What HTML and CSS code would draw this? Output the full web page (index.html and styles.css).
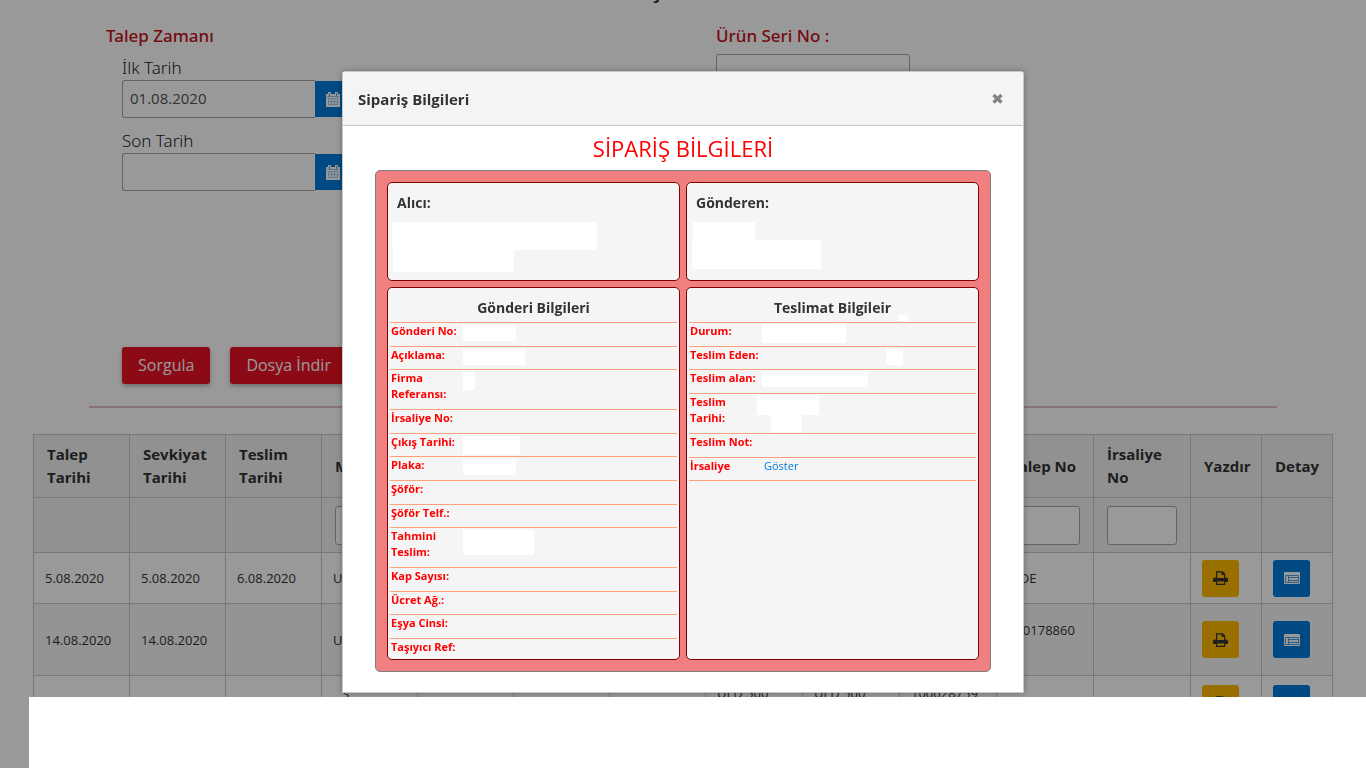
FILE: index.html
```html
<!DOCTYPE html>
<html lang="tr">
<head>
<meta charset="utf-8">
<title>Sipariş Bilgileri</title>
<link rel="stylesheet" href="styles.css">
</head>
<body>
<svg class="sprite" aria-hidden="true">
  <symbol id="calendar" viewBox="0 0 14 15">
    <path fill="#fff" d="M0 2h14v13H0z"/>
    <path fill="#fff" d="M2 0h3v4H2zM9 0h3v4H9z"/>
    <path fill="#8fc1ec" d="M1 4h12v1H1z"/>
    <path fill="#4d9fdf" d="M3 1h1v3H3zM10 1h1v3h-1z"/>
    <path stroke="#a5cdef" fill="none" d="M2 6.500h10M2 9.500h10M2 12.500h10M2.500 6v7M5.500 6v7M8.500 6v7M11.500 6v7"/>
  </symbol>
  <symbol id="printer" viewBox="0 0 15 14">
    <path fill="none" stroke="#333" stroke-width="1.200" d="M3.600 7V.8h6l2 2V7"/>
    <path fill="#333" d="M8.500 1v3H12V3zM1.500 6.500H3V7h9v-.5h1.500Q15 7 15 8.500V11H0V8.500Q0 7 1.500 6.500z"/>
    <path fill="#ffba01" stroke="#333" stroke-width="1.200" d="M3.600 9.800h8v3.500h-8z"/>
  </symbol>
  <symbol id="list" viewBox="0 0 16 12">
    <rect width="16" height="12" rx="1" fill="#fff"/>
    <path fill="none" stroke="#4d9fdf" d="M1.500 3.500h13v7h-13z"/>
    <path fill="none" stroke="#4d9fdf" d="M4.500 4v7M5 5.500h9M5 8.500h9"/>
  </symbol>
</svg>

<main class="page">
  <h1 class="page-title">ş</h1>
  <form class="filters">
    <section class="filter-group">
      <h2 class="group-title">Talep Zamanı</h2>
      <div class="group-body">
        <label for="first-date">İlk Tarih</label>
        <div class="date-field">
          <input id="first-date" type="text" value="01.08.2020">
          <button type="button" aria-label="Takvim"><svg width="14" height="15"><use href="#calendar"/></svg></button>
        </div>
        <label for="last-date">Son Tarih</label>
        <div class="date-field">
          <input id="last-date" type="text">
          <button type="button" aria-label="Takvim"><svg width="14" height="15"><use href="#calendar"/></svg></button>
        </div>
      </div>
    </section>
    <section class="filter-group">
      <label class="group-title" for="serial">Ürün Seri No :</label>
      <input id="serial" class="serial" type="text">
    </section>
  </form>
  <div class="actions">
    <button type="button">Sorgula</button>
    <button type="button">Dosya İndir</button>
  </div>
  <hr class="divider">

  <table class="orders">
    <colgroup><col span="7" class="col-a"><col span="5" class="col-b"><col span="2" class="col-c"></colgroup>
    <thead>
      <tr><th>Talep Tarihi</th><th>Sevkiyat Tarihi</th><th>Teslim Tarihi</th><th>M</th><th></th><th></th><th></th><th></th><th></th><th></th><th>Talep No</th><th>İrsaliye No</th><th>Yazdır</th><th>Detay</th></tr>
      <tr class="search-row"><td></td><td></td><td></td><td><input type="text" aria-label="M"></td><td></td><td></td><td></td><td></td><td></td><td></td><td><input type="text" aria-label="Talep No"></td><td><input type="text" aria-label="İrsaliye No"></td><td></td><td></td></tr>
    </thead>
    <tbody>
      <tr><td>5.08.2020</td><td>5.08.2020</td><td>6.08.2020</td><td>U</td><td></td><td></td><td></td><td></td><td></td><td></td><td>İADE</td><td></td>
        <td><button class="icon-button print" type="button" aria-label="Yazdır"><svg width="15" height="14"><use href="#printer"/></svg></button></td>
        <td><button class="icon-button detail" type="button" aria-label="Detay"><svg width="16" height="12"><use href="#list"/></svg></button></td></tr>
      <tr class="tall"><td>14.08.2020</td><td>14.08.2020</td><td></td><td>U</td><td></td><td></td><td></td><td></td><td></td><td></td><td>100178860<br>&nbsp;</td><td></td>
        <td><button class="icon-button print" type="button" aria-label="Yazdır"><svg width="15" height="14"><use href="#printer"/></svg></button></td>
        <td><button class="icon-button detail" type="button" aria-label="Detay"><svg width="16" height="12"><use href="#list"/></svg></button></td></tr>
      <tr><td></td><td></td><td></td><td>&nbsp; &nbsp;ş<br>&nbsp;</td><td></td><td></td><td></td><td>ULD 500<br>&nbsp;</td><td>ULD 500<br>&nbsp;</td><td>100028759<br>&nbsp;</td><td></td><td></td>
        <td><button class="icon-button print" type="button" aria-label="Yazdır"><svg width="15" height="14"><use href="#printer"/></svg></button></td>
        <td><button class="icon-button detail" type="button" aria-label="Detay"><svg width="16" height="12"><use href="#list"/></svg></button></td></tr>
    </tbody>
  </table>
</main>

<div class="overlay">
  <div class="dialog" role="dialog" aria-labelledby="dialog-title">
    <header class="dialog-header">
      <h2 id="dialog-title">Sipariş Bilgileri</h2>
      <button class="close" type="button" aria-label="Kapat"><svg width="11" height="11" viewBox="0 0 11 11"><path d="M1.500 2l8 7.500M9.500 2l-8 7.500" stroke="#848484" stroke-width="3.400"/></svg></button>
    </header>
    <div class="dialog-body">
      <h3 class="order-title">SİPARİŞ BİLGİLERİ</h3>
      <div class="order">
        <section class="panel party">
          <h4>Alıcı:</h4>
          <span class="mask m-recipient-1"></span>
          <span class="mask m-recipient-2"></span>
        </section>
        <section class="panel party">
          <h4>Gönderen:</h4>
          <span class="mask m-sender-1"></span>
          <span class="mask m-sender-2"></span>
        </section>
        <section class="panel">
          <h4 class="centered">Gönderi Bilgileri</h4>
          <dl class="details shipment">
            <div><dt>Gönderi No:</dt><dd><span class="mask m-53"></span></dd></div>
            <div><dt>Açıklama:</dt><dd><span class="mask m-62"></span></dd></div>
            <div><dt>Firma Referansı:</dt><dd><span class="mask m-12"></span></dd></div>
            <div><dt>İrsaliye No:</dt><dd></dd></div>
            <div><dt>Çıkış Tarihi:</dt><dd><span class="mask m-57"></span></dd></div>
            <div><dt>Plaka:</dt><dd><span class="mask m-53"></span></dd></div>
            <div><dt>Şöför:</dt><dd></dd></div>
            <div><dt>Şöför Telf.:</dt><dd></dd></div>
            <div><dt>Tahmini Teslim:</dt><dd><span class="mask m-71"></span></dd></div>
            <div><dt>Kap Sayısı:</dt><dd></dd></div>
            <div><dt>Ücret Ağ.:</dt><dd></dd></div>
            <div><dt>Eşya Cinsi:</dt><dd></dd></div>
            <div class="last"><dt>Taşıyıcı Ref:</dt><dd></dd></div>
          </dl>
        </section>
        <section class="panel">
          <h4 class="centered">Teslimat Bilgileir<span class="mask m-dot"></span></h4>
          <dl class="details delivery">
            <div><dt>Durum:</dt><dd><span class="mask m-84"></span></dd></div>
            <div><dt>Teslim Eden:</dt><dd><span class="mask m-17"></span></dd></div>
            <div><dt>Teslim alan:</dt><dd><span class="mask m-106"></span></dd></div>
            <div><dt>Teslim Tarihi:</dt><dd><span class="mask m-date"></span><span class="mask m-time"></span></dd></div>
            <div><dt>Teslim Not:</dt><dd></dd></div>
            <div><dt>İrsaliye</dt><dd><a href="#">Göster</a></dd></div>
          </dl>
        </section>
      </div>
    </div>
  </div>
</div>
<div class="bottom-cover"></div>
</body>
</html>
```
FILE: styles.css
```css
* { box-sizing: border-box; }
body {
  margin: 0;
  height: 100vh;
  overflow: hidden;
  background: #fff;
  color: #333;
  font: 14px/20px "Open Sans", "Noto Sans", sans-serif;
}
h1, h2, h3, h4, dl, dd { margin: 0; }
button, input { font: inherit; }
svg { display: block; }
.sprite { position: absolute; width: 0; height: 0; }

.page { height: 100vh; overflow: hidden; }
.page-title {
  margin: -28px 54px 0 0;
  height: 52px;
  font: 600 24px/32px "Open Sans", sans-serif;
  text-align: center;
  color: #222;
}
.filters {
  display: grid;
  grid-template-columns: 610px 1fr;
  height: 323px;
  padding-left: 106px;
}
.group-title {
  display: block;
  font: 500 17px/24px "Noto Sans", sans-serif;
  color: #c4121c;
}
.group-body { padding: 8px 0 0 16px; }
.group-body label {
  display: block;
  font: 300 17px/24px "Noto Sans", sans-serif;
  color: #212529;
}
.date-field { display: flex; align-items: center; margin-bottom: 11px; }
.date-field input, .serial {
  width: 194px;
  height: 38px;
  padding: 0 7px 2px;
  border: 1px solid #a6a6a6;
  border-radius: 3px;
  background: #fff;
  color: #555;
  font-size: 15px;
}
.date-field input { border-right: 0; border-radius: 3px 0 0 3px; width: 193px; }
.date-field button {
  display: grid;
  place-items: center;
  width: 36px;
  height: 36px;
  padding: 0;
  border: 0;
  background: #007ad9;
}
.serial { display: block; margin-top: 6px; }
.actions { display: flex; gap: 20px; padding-left: 122px; }
.actions button {
  height: 37px;
  padding: 0 16px 2px;
  border: 0;
  border-radius: 3px;
  background: #e91224;
  box-shadow: 0 2px 4px rgba(0, 0, 0, .3);
  color: #fff;
  font-size: 16px;
}
.divider { width: 87%; height: 2px; margin: 22px auto 26px; border: 0; background: #e5bfc2; }

.orders { width: 1300px; margin-left: 33px; border-collapse: collapse; table-layout: fixed; font-size: 13px; }
.col-a { width: 96px; }
.col-b { width: 97px; }
.col-c { width: 71px; }
.orders th, .orders td { border: 1px solid #c8c8c8; }
.orders th {
  height: 63px;
  padding: 8px 13px;
  background: #f2f2f2;
  font: 700 15px/23px "Open Sans", sans-serif;
  text-align: left;
}
.orders td { height: 51px; padding: 0 11px; }
.orders .search-row td { height: 55px; padding: 0 13px; background: #f2f2f2; }
.orders .tall td { height: 72px; background: #f7f7f7; }
.orders tbody tr:last-child td { height: 55px; }
.orders input {
  display: block;
  width: 100%;
  height: 39px;
  border: 1px solid #a6a6a6;
  border-radius: 3px;
  background: #fff;
}
.icon-button {
  display: grid;
  place-items: center;
  width: 37px;
  height: 37px;
  padding: 0;
  border: 0;
  border-radius: 3px;
}
.print { background: #ffba01; }
.detail { background: #007ad9; }

.overlay {
  position: fixed;
  inset: 0;
  display: flex;
  justify-content: center;
  align-items: flex-start;
  padding-top: 71px;
  background: rgba(0, 0, 0, .4);
}
.dialog {
  width: 682px;
  border: 1px solid #c8c8c8;
  border-radius: 3px 3px 0 0;
  background: #fff;
  box-shadow: 0 0 6px rgba(0, 0, 0, .3);
}
.dialog-header {
  display: flex;
  justify-content: space-between;
  align-items: center;
  height: 54px;
  padding: 0 20px 0 15px;
  border-bottom: 1px solid #c8c8c8;
  background: #f4f4f4;
}
.dialog-header h2 { font-size: 15px; font-weight: 700; }
.close { padding: 0; border: 0; background: none; }
.dialog-body { padding: 7px 32px 20px; }
.order-title { font-size: 22px; line-height: 30px; font-weight: 400; color: #f00; text-align: center; }
.order {
  display: grid;
  grid-template-columns: 1fr 1fr;
  gap: 6px;
  margin-top: 7px;
  padding: 11px;
  border: 1px solid #808080;
  border-radius: 5px;
  background: #f08080;
}
.panel { border: 1px solid #800000; border-radius: 5px; background: #f5f5f5; }
.panel h4 { font-size: 14px; font-weight: 700; }
.panel .centered { padding: 10px 0 4px; text-align: center; }
.party { min-height: 99px; padding: 10px 4px 8px; }
.party h4 { padding: 0 5px 9px; }
.details { display: flex; flex-direction: column; margin: 0 2px; border-top: 1px solid #ffa07a; }
.details > div {
  display: flex;
  flex: 1 0 auto;
  padding: 0 1px 6px;
  border-bottom: 1px solid #ffa07a;
  font-size: 11px;
  line-height: 16px;
}
.details .last { flex-grow: 0; border-bottom: 0; padding-bottom: 4px; }
.details dt { width: 72px; flex: none; font-weight: 700; color: #f00; }
.details dd { margin-bottom: -6px; }
.shipment { min-height: 337px; }
.delivery { min-height: 159px; }
.details a { margin-left: 2px; color: #007ad9; text-decoration: none; }

.mask { display: block; height: 16px; margin-top: 2px; background: #fff; }
.party .mask { margin-top: 0; }
.m-recipient-1 { width: 205px; height: 28px; }
.m-recipient-2 { width: 121px; height: 22px; margin-left: 1px; }
.m-sender-1 { width: 62px; height: 18px; margin-left: 2px; }
.m-sender-2 { width: 129px; height: 29px; margin-left: 1px; }
.m-53 { width: 53px; }
.m-62 { width: 62px; }
.m-12 { width: 12px; height: 18px; }
.m-57 { width: 57px; height: 18px; }
.m-71 { width: 71px; height: 25px; }
.m-84 { width: 84px; height: 19px; margin-top: 1px; }
.m-17 { width: 17px; margin-left: 124px; }
.m-106 { width: 106px; margin-top: 1px; }
.m-date { width: 62px; height: 20px; margin-top: 1px; margin-left: -5px; }
.m-time { width: 31px; height: 18px; margin-top: 0; margin-left: 9px; }
.centered { position: relative; }
.m-dot { position: absolute; right: 70px; bottom: 1px; width: 9px; height: 6px; }
.bottom-cover { position: fixed; top: 697px; right: 0; bottom: 0; left: 29px; background: #fff; }
```
